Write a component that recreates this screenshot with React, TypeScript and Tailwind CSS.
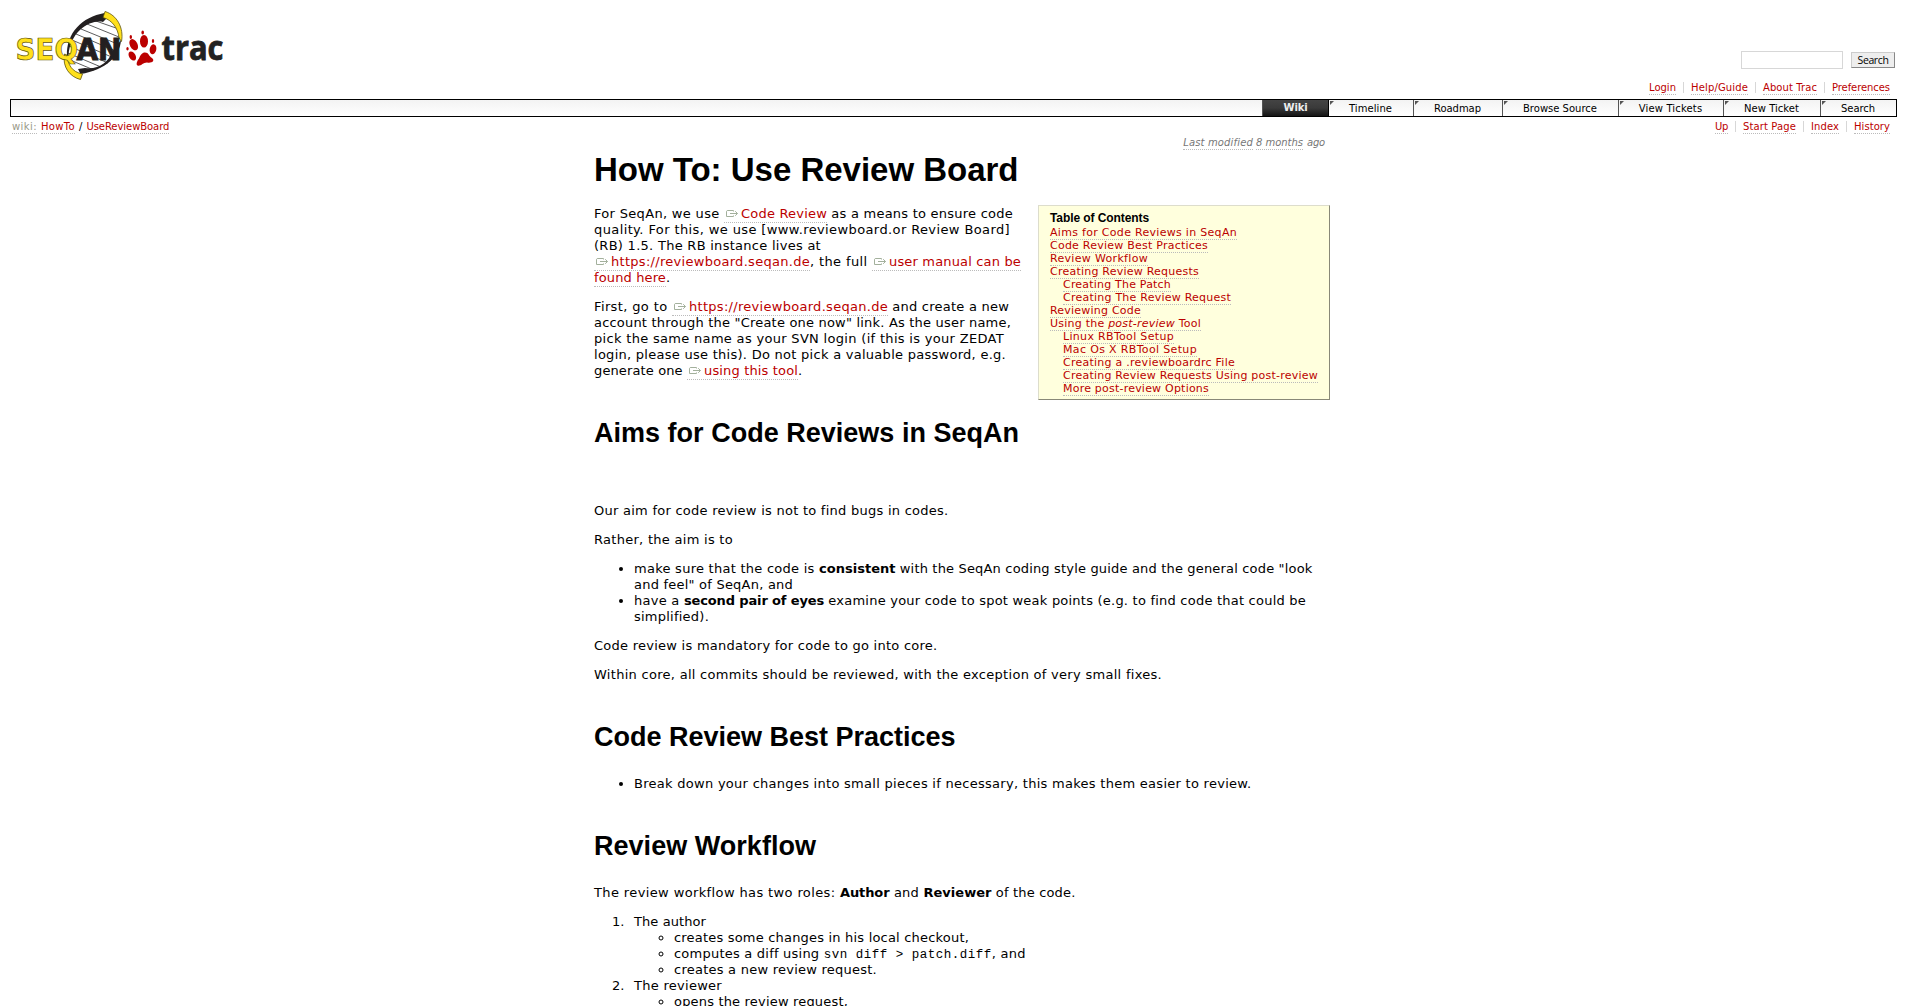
import { useLayoutEffect, useRef, type ReactNode } from 'react';

/* Inline text whose tracking is adjusted so that it fills exactly `w` pixels. */
function T({ w, children, className = '' }: { w: number; children: ReactNode; className?: string }) {
  const ref = useRef<HTMLSpanElement>(null);
  useLayoutEffect(() => {
    const el = ref.current;
    if (!el) return;
    el.style.letterSpacing = '0px';
    const natural = el.getBoundingClientRect().width;
    const n = (el.textContent ?? '').length;
    el.style.letterSpacing = `${(w - natural) / n}px`;
  }, [w]);
  return (
    <span ref={ref} className={'whitespace-pre ' + className}>
      {children}
    </span>
  );
}

const link = 'text-[#bb0000] border-b border-dotted border-[#bbbbbb]';

function Ext({ w, children, icon = true }: { w: number; children: string; icon?: boolean }) {
  return (
    <a className={link + ' pb-px whitespace-pre'}>
      {icon && (
        <svg className="mr-[3px] ml-[2px] inline-block align-baseline" width="12" height="8" viewBox="0 0 12 8" fill="none" stroke="#a3b09c" strokeWidth="1">
          <path d="M7.5 1.5V.5H1.2L.5 1.2V6.5H7.5V5.500M4 3.500H11.500M9.200 1.200L11.500 3.500L9.200 5.800" />
        </svg>
      )}
      <T w={w}>{children}</T>
    </a>
  );
}

function Line({ children }: { children: ReactNode }) {
  return <span className="block h-4 whitespace-nowrap">{children}</span>;
}

function Logo() {
  return (
    <svg width="240" height="90" viewBox="0 0 240 90" className="block">
      <path d="M105 14C90 18 73 28 70 46C68 58 74 70 82 73C98 71 117 62 120 46C122 34 115 20 105 14Z" fill="#fff" />
      <g stroke="#333" strokeWidth=".8" fill="none">
        <path d="M93 20L116 28M87 24L119 37M81 29L120 45M76 34L118 52M72 40L114 58M69 46L108 63M68 53L101 67M70 60L94 70" />
      </g>
      <path d="M67 56C66 33 82 17 104.500 13L107 18L103 22C92 19 70 30 68.500 56Z" fill="#231f20" />
      <path d="M121 40C120 56 106 70 80.500 74L78 69L85 68C98 70 109 62 112 52Z" fill="#231f20" />
      <path d="M105 11.500C117 15 124 28 121.500 41.500L119 38C118 28 112 20 103 17.500Z" fill="#ffe01b" stroke="#5d530c" strokeWidth=".8" />
      <path d="M67 55C68 65 72 72 82.500 74L80.500 79.500C70 77 62 67 64.500 54Z" fill="#ffe01b" stroke="#5d530c" strokeWidth=".8" />
      <g fontFamily="DejaVu Sans" fontWeight="bold" fontSize="30.500">
        <text x="15.500" y="60.300" textLength="62.500" lengthAdjust="spacingAndGlyphs" fill="#ffe01b" stroke="#5d530c" strokeWidth=".7">SEQ</text>
        <text x="76.500" y="60.300" textLength="45" lengthAdjust="spacingAndGlyphs" fill="#231f20" stroke="#231f20" strokeWidth="1">AN</text>
      </g>
      <g fill="#bb0000">
        <ellipse cx="132.300" cy="56" rx="3.200" ry="5" transform="rotate(-32 132.300 56)" />
        <ellipse cx="133.700" cy="44.700" rx="3.800" ry="6" transform="rotate(-28 133.700 44.700)" />
        <ellipse cx="144" cy="41.300" rx="4" ry="6.300" />
        <ellipse cx="153" cy="49.300" rx="3.300" ry="5" transform="rotate(12 153 49.300)" />
        <ellipse cx="127.500" cy="48.700" rx="1.200" ry="1.700" />
        <ellipse cx="130.800" cy="37" rx="1.200" ry="1.900" />
        <ellipse cx="142.700" cy="32.500" rx="1.300" ry="2" />
        <ellipse cx="153" cy="41" rx="1.200" ry="2" />
        <path d="M145 52.500C149 52.500 148.500 56 152 58C155.500 61 151.500 63.500 147 62.500C143 62.500 141.500 66 138 65.700C135.500 65 137 61 139 58.500C140.500 55 142 52.500 145 52.500Z" />
      </g>
      <text x="161.500" y="60.300" textLength="62" lengthAdjust="spacingAndGlyphs" fontFamily="Open Sans" fontWeight="bold" fontSize="34.500" fill="#222" stroke="#222" strokeWidth=".8">trac</text>
    </svg>
  );
}

const meta: [string, number][] = [['Login', 27], ['Help/Guide', 57], ['About Trac', 54], ['Preferences', 58]];
const ctx: [string, number][] = [['Up', 13], ['Start Page', 53], ['Index', 28], ['History', 36]];

function MiniNav({ items }: { items: [string, number][] }) {
  return (
    <ul className="flex h-[13px] text-[10px] leading-[11px]">
      {items.map(([t, w], i) => (
        <li key={t} className="flex">
          {i > 0 && <span className="mx-[7px] h-[11px] w-px bg-[#d7d7d7]" />}
          <a className={link + ' block h-[13px]'}><T w={w}>{t}</T></a>
        </li>
      ))}
    </ul>
  );
}

const tabs: [string, string, number][] = [
  ['Timeline', 'w-[84px]', 43], ['Roadmap', 'w-[89px]', 47], ['Browse Source', 'w-[116px]', 74],
  ['View Tickets', 'w-[105px]', 63.5], ['New Ticket', 'w-[97px]', 55], ['Search', 'w-[76px]', 34],
];

const toc: [ReactNode, number, boolean][] = [
  ['Aims for Code Reviews in SeqAn', 187, false],
  ['Code Review Best Practices', 158, false],
  ['Review Workflow', 98, false],
  ['Creating Review Requests', 149, false],
  ['Creating The Patch', 108, true],
  ['Creating The Review Request', 168, true],
  ['Reviewing Code', 91, false],
  [<>Using the <i>post-review</i> Tool</>, 151, false],
  ['Linux RBTool Setup', 111, true],
  ['Mac Os X RBTool Setup', 134, true],
  ['Creating a .reviewboardrc File', 172, true],
  ['Creating Review Requests Using post-review', 255, true],
  ['More post-review Options', 146, true],
];

const h2 = "font-['Liberation_Sans'] text-[27px] leading-8 font-bold whitespace-nowrap";

export default function App() {
  return (
    <div className="h-[1006px] overflow-hidden bg-white font-['DejaVu_Sans',sans-serif] text-[13px] leading-4 text-black">
      <header className="flex h-[99px] justify-between">
        <Logo />
        <div className="flex flex-col items-end pt-[51px]">
          <form className="mr-3 flex items-center gap-2">
            <input className="h-[18px] w-[102px] border border-[#d7d7d7] bg-white outline-none" />
            <button type="button" className="h-4 w-11 border border-[#cccccc] border-r-[#888888] border-b-[#888888] bg-[#eeeeee] font-['Open_Sans'] text-[10.5px] leading-3 text-black">
              <T w={31}>Search</T>
            </button>
          </form>
          <div className="mt-[13px] mr-[17px]"><MiniNav items={meta} /></div>
        </div>
      </header>

      <nav className="mr-[10px] ml-[10px] flex h-[18px] justify-end border border-black bg-linear-to-b from-[#f3f3f3] to-white text-[10px] leading-[16px]">
        <div className="h-4 w-[67px] border-r border-l border-r-black border-l-[#555555] bg-linear-to-b from-[#444444] via-[#3a3a3a] to-[#151515] text-center font-bold text-[#eeeeee]">
          <T w={24}>Wiki</T>
        </div>
        {tabs.map(([t, wc, w], i) => (
          <div key={t} className={'flex h-4 justify-center ' + wc + (i > 0 ? ' border-l border-[#555555]' : '')}>
            <svg width="5" height="5" className="mt-px ml-px shrink-0"><path d="M0 0H4L0 4Z" fill="#555" /></svg>
            <span className="flex-1 pt-px pr-[7px] text-center leading-[15px]"><T w={w}>{t}</T></span>
          </div>
        ))}
      </nav>

      <div className="mt-[4px] flex h-[13px] justify-between pr-[17px] pl-3 text-[10px] leading-[11px]">
        <div className="flex">
          <a className="h-[13px] border-b border-dotted border-[#bbbbbb] text-[#999988]"><T w={25}>wiki:</T></a>
          <a className={link + ' ml-1 h-[13px]'}><T w={34}>HowTo</T></a>
          <span className="mx-[4px]">/</span>
          <a className={link + ' h-[13px]'}><T w={83}>UseReviewBoard</T></a>
        </div>
        <MiniNav items={ctx} />
      </div>

      <main className="mx-auto mt-[3px] w-[753px] pl-[17px]">
        <div className="flex h-[13px] justify-end pr-[5px] text-[10px] leading-[11px] text-[#777777] italic">
          <a className="h-[13px] border-b border-dotted border-[#bbbbbb]"><T w={70}>Last modified</T></a>
          <a className="ml-[3px] h-[13px] border-b border-dotted border-[#bbbbbb]"><T w={47}>8 months</T></a>
          <span className="ml-1"><T w={18}>ago</T></span>
        </div>

        <h1 className="-mt-px h-[57px] font-['Liberation_Sans'] text-[33px] leading-[42px] font-bold whitespace-nowrap"><T w={424.5}>How To: Use Review Board</T></h1>

        <div className="flex justify-between">
          <div>
            <p className="mb-[13px]">
              <Line><T w={130}>For SeqAn, we use </T><Ext w={86}>Code Review</Ext><T w={186}> as a means to ensure code</T></Line>
              <Line><T w={416}>quality. For this, we use [www.reviewboard.or Review Board]</T></Line>
              <Line><T w={227}>(RB) 1.5. The RB instance lives at</T></Line>
              <Line><Ext w={199}>https://reviewboard.seqan.de</Ext><T w={62}>, the full </T><Ext w={132}>user manual can be</Ext></Line>
              <Line><Ext w={72} icon={false}>found here</Ext>.</Line>
            </p>
            <p>
              <Line><T w={78}>First, go to </T><Ext w={199}>https://reviewboard.seqan.de</Ext><T w={121}> and create a new</T></Line>
              <Line><T w={417}>account through the "Create one now" link. As the user name,</T></Line>
              <Line><T w={410}>pick the same name as your SVN login (if this is your ZEDAT</T></Line>
              <Line><T w={412}>login, please use this). Do not pick a valuable password, e.g.</T></Line>
              <Line><T w={93}>generate one </T><Ext w={94}>using this tool</Ext>.</Line>
            </p>
          </div>
          <aside className="-mt-px h-[195px] w-[292px] border border-[#ddddcc] border-r-[#888877] border-b-[#888877] bg-[#ffffdd] pt-[6px] pl-[11px] text-[11px] leading-[13px]">
            <h4 className="h-[14px] font-['Liberation_Sans'] text-[12px] font-bold"><T w={99}>Table of Contents</T></h4>
            <ol>
              {toc.map(([t, w, sub], i) => (
                <li key={i} className={'h-[13px] ' + (sub ? 'pl-[13px]' : '')}>
                  <a className={link}><T w={w}>{t}</T></a>
                </li>
              ))}
            </ol>
          </aside>
        </div>

        <h2 className={h2 + ' mt-[17px]'}><T w={425}>Aims for Code Reviews in SeqAn</T></h2>
        <p className="mt-[54px]"><T w={354.5}>Our aim for code review is not to find bugs in codes.</T></p>
        <p className="mt-[13px]"><T w={139}>Rather, the aim is to</T></p>
        <ul className="mt-[13px] list-disc pl-10">
          <li>
            <Line><T w={185}>make sure that the code is </T><T w={76.5} className="font-bold">consistent</T><T w={417}> with the SeqAn coding style guide and the general code "look</T></Line>
            <Line><T w={159}>and feel" of SeqAn, and</T></Line>
          </li>
          <li>
            <Line><T w={50}>have a </T><T w={140} className="font-bold">second pair of eyes</T><T w={482}> examine your code to spot weak points (e.g. to find code that could be</T></Line>
            <Line><T w={75}>simplified).</T></Line>
          </li>
        </ul>
        <p className="mt-[13px]"><T w={343.5}>Code review is mandatory for code to go into core.</T></p>
        <p className="mt-[13px]"><T w={568}>Within core, all commits should be reviewed, with the exception of very small fixes.</T></p>
        <h2 className={h2 + ' mt-[38px]'}><T w={361.5}>Code Review Best Practices</T></h2>
        <ul className="mt-[23px] list-disc pl-10">
          <li><T w={617.5}>Break down your changes into small pieces if necessary, this makes them easier to review.</T></li>
        </ul>
        <h2 className={h2 + ' mt-[38px]'}><T w={222}>Review Workflow</T></h2>
        <p className="mt-[23px]">
          <T w={246}>The review workflow has two roles: </T><T w={49.5} className="font-bold">Author</T><T w={34}> and </T><T w={68} className="font-bold">Reviewer</T><T w={84}> of the code.</T>
        </p>
        <ol className="mt-[13px] pl-10">
          <li>
            <Line><span className="-ml-[22px] inline-block w-[22px]">1.</span><T w={72}>The author</T></Line>
            <ul className="list-[circle] pl-10">
              <li><Line><T w={295}>creates some changes in his local checkout,</T></Line></li>
              <li><Line><T w={149.5}>computes a diff using </T><T w={168} className="font-['Liberation_Mono'] text-[12.5px]">svn diff &gt; patch.diff</T><T w={34}>, and</T></Line></li>
              <li><Line><T w={203}>creates a new review request.</T></Line></li>
            </ul>
          </li>
          <li>
            <Line><span className="-ml-[22px] inline-block w-[22px]">2.</span><T w={88}>The reviewer</T></Line>
            <ul className="list-[circle] pl-10">
              <li><Line><T w={174}>opens the review request,</T></Line></li>
            </ul>
          </li>
        </ol>
      </main>
    </div>
  );
}
